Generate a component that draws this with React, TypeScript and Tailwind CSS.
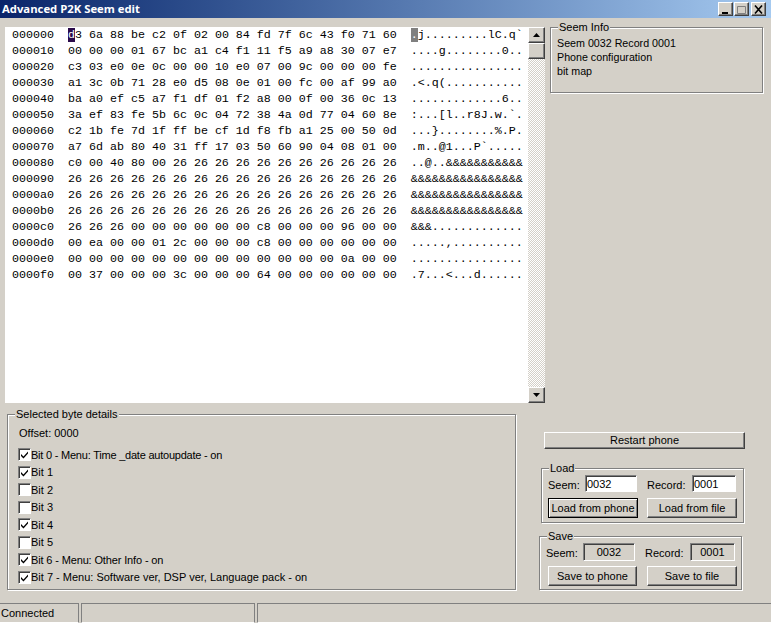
const rows = [
  'd3 6a 88 be c2 0f 02 00 84 fd 7f 6c 43 f0 71 60',
  '00 00 00 01 67 bc a1 c4 f1 11 f5 a9 a8 30 07 e7',
  'c3 03 e0 0e 0c 00 00 10 e0 07 00 9c 00 00 00 fe',
  'a1 3c 0b 71 28 e0 d5 08 0e 01 00 fc 00 af 99 a0',
  'ba a0 ef c5 a7 f1 df 01 f2 a8 00 0f 00 36 0c 13',
  '3a ef 83 fe 5b 6c 0c 04 72 38 4a 0d 77 04 60 8e',
  'c2 1b fe 7d 1f ff be cf 1d f8 fb a1 25 00 50 0d',
  'a7 6d ab 80 40 31 ff 17 03 50 60 90 04 08 01 00',
  'c0 00 40 80 00 26 26 26 26 26 26 26 26 26 26 26',
  '26 26 26 26 26 26 26 26 26 26 26 26 26 26 26 26',
  '26 26 26 26 26 26 26 26 26 26 26 26 26 26 26 26',
  '26 26 26 26 26 26 26 26 26 26 26 26 26 26 26 26',
  '26 26 26 00 00 00 00 00 00 c8 00 00 00 96 00 00',
  '00 ea 00 00 01 2c 00 00 00 c8 00 00 00 00 00 00',
  '00 00 00 00 00 00 00 00 00 00 00 00 00 0a 00 00',
  '00 37 00 00 00 3c 00 00 00 64 00 00 00 00 00 00',
];

const bits = [
  { label: 'Bit 0 - Menu: Time _date autoupdate - on', on: true, fit: 'tracking-[-0.22px]' },
  { label: 'Bit 1', on: true, fit: '' },
  { label: 'Bit 2', on: false, fit: '' },
  { label: 'Bit 3', on: false, fit: '' },
  { label: 'Bit 4', on: true, fit: '' },
  { label: 'Bit 5', on: false, fit: '' },
  { label: 'Bit 6 - Menu: Other Info - on', on: true, fit: 'tracking-[-0.14px]' },
  { label: 'Bit 7 - Menu: Software ver, DSP ver, Language pack - on', on: true, fit: '' },
];

const raised =
  'border border-t-white border-l-white border-r-[#404040] border-b-[#404040] shadow-[inset_-1px_-1px_0_#808080]';
const sunken =
  'border border-t-[#808080] border-l-[#808080] border-r-white border-b-white shadow-[inset_1px_1px_0_#404040]';
const etched =
  'border border-[#808080] shadow-[1px_1px_0_#fff,inset_1px_1px_0_#fff]';

// bytes to printable ascii, anything else shows as a dot
function toAscii(hex: string) {
  return hex
    .split(' ')
    .map((h) => {
      const c = parseInt(h, 16);
      return c >= 32 && c < 127 ? String.fromCharCode(c) : '.';
    })
    .join('');
}

function Group({ title, className, children }: { title: string; className: string; children: React.ReactNode }) {
  return (
    <fieldset className={`${etched} ${className}`}>
      <legend className="ml-[7px] bg-[#d4d0c8] px-[1px] leading-[14px]">{title}</legend>
      {children}
    </fieldset>
  );
}

function WinButton({ label, className, isDefault }: { label: string; className: string; isDefault?: boolean }) {
  return (
    <button
      className={`flex items-center justify-center bg-[#d4d0c8] ${
        isDefault ? 'border border-black shadow-[inset_1px_1px_0_#fff,inset_-1px_-1px_0_#808080]' : raised
      } ${className}`}
    >
      {label}
    </button>
  );
}

function CheckBox({ on }: { on: boolean }) {
  return (
    <span className={`flex h-[13px] w-[13px] shrink-0 items-center justify-center bg-white ${sunken}`}>
      {on && (
        <svg width="9" height="9" viewBox="0 0 9 9">
          <path d="M1 4 L3.5 6.5 L8 1.5 V3.5 L3.5 8.5 L1 6 Z" fill="#000" />
        </svg>
      )}
    </span>
  );
}

function ArrowButton({ up }: { up?: boolean }) {
  return (
    <div className={`flex h-[16px] w-[17px] items-center justify-center bg-[#d4d0c8] ${raised}`}>
      <svg width="7" height="4" viewBox="0 0 7 4">
        <path d={up ? 'M3.5 0 L7 4 H0 Z' : 'M0 0 H7 L3.5 4 Z'} fill="#000" />
      </svg>
    </div>
  );
}

function CaptionButton({ children }: { children: React.ReactNode }) {
  return (
    <div className={`flex h-[14px] w-[15px] items-center justify-center bg-[#d4d0c8] ${raised}`}>
      <svg width="10" height="9" viewBox="0 0 10 9">
        {children}
      </svg>
    </div>
  );
}

export default function App() {
  return (
    <div className="flex h-[623px] w-[771px] flex-col overflow-hidden bg-[#d4d0c8] font-['Liberation_Sans',Arial,sans-serif] text-[11px] text-black">
      {/* title bar */}
      <div className="flex h-[18px] items-center justify-between bg-gradient-to-r from-[#0a246a] to-[#a6caf0] pl-[2px] pr-[5px]">
        <span className="font-['Open_Sans',sans-serif] text-[11.3px] font-bold text-white">Advanced P2K Seem edit</span>
        <div className="flex gap-[1px]">
          <CaptionButton>
            <rect x="1" y="7" width="6" height="2" fill="#000" />
          </CaptionButton>
          <CaptionButton>
            <path d="M0.5 1.5 H8.5 V8.5 H0.5 Z" fill="none" stroke="#808080" />
          </CaptionButton>
          <div className="ml-[1px]">
            <CaptionButton>
              <path d="M1 0.5 L8 8.5 M8 0.5 L1 8.5" stroke="#000" strokeWidth="1.6" />
            </CaptionButton>
          </div>
        </div>
      </div>

      {/* hex view + seem info */}
      <div className="flex h-[385px]">
        <div className="ml-[5px] mt-[9px] flex h-[376px] w-[540px]">
          <div className="h-full w-[523px] overflow-hidden bg-white pl-[7px] font-['Liberation_Mono',monospace] text-[11.67px] leading-[16px] whitespace-pre">
            {rows.map((hex, i) => {
              const offset = (i * 16).toString(16).padStart(6, '0');
              const ascii = toAscii(hex);
              return (
                <div key={offset} className="h-[16px]">
                  {offset}
                  {'  '}
                  {i === 0 ? (
                    <>
                      <span className="bg-[#2a0a4a] text-white">{hex[0]}</span>
                      {hex.slice(1)}
                      {'  '}
                      <span className="bg-[#808080] text-white">{ascii[0]}</span>
                      {ascii.slice(1)}
                    </>
                  ) : (
                    <>
                      {hex}
                      {'  '}
                      {ascii}
                    </>
                  )}
                </div>
              );
            })}
          </div>
          <div className="flex h-full w-[17px] flex-col">
            <ArrowButton up />
            <div className={`h-[16px] w-[17px] bg-[#d4d0c8] ${raised}`} />
            <div className="flex-1 bg-[conic-gradient(#fff_25%,#d4d0c8_0_50%,#fff_0_75%,#d4d0c8_0)] bg-[length:2px_2px]" />
            <ArrowButton />
          </div>
        </div>
        <div className="ml-[5px] mt-[2px]">
          <Group title="Seem Info" className="h-[73px] w-[213px]">
            <div className="pl-[6px] pt-[2px] text-[10.7px] leading-[14px]">
              <div>Seem 0032 Record 0001</div>
              <div>Phone configuration</div>
              <div>bit map</div>
            </div>
          </Group>
        </div>
      </div>

      {/* bit details + load/save */}
      <div className="flex h-[200px]">
        <div className="w-[539px] pl-[7px] pt-[4px]">
          <Group title="Selected byte details" className="h-[183px] w-[509px]">
            <div className="pl-[11px] pt-[5px] leading-[14px]">Offset: 0000</div>
            <div className="mt-[6px] pl-[10px]">
              {bits.map((bit) => (
                <div key={bit.label} className="flex h-[17.5px] items-center">
                  <CheckBox on={bit.on} />
                  <span className={bit.fit}>{bit.label}</span>
                </div>
              ))}
            </div>
          </Group>
        </div>
        <div className="flex flex-col items-start pt-[29px]">
          <WinButton label="Restart phone" className="ml-[5px] h-[17px] w-[201px]" />
          <Group title="Load" className="ml-[2px] mt-[12px] h-[62px] w-[203px]">
            <div className="flex h-[17px] items-center pl-[6px]">
              <span className="w-[37px] pt-[3px]">Seem:</span>
              <span className={`h-[17px] w-[52px] bg-white pl-[1px] pt-[1px] leading-[15px] ${sunken}`}>0032</span>
              <span className="ml-[10px] w-[45px] pt-[3px]">Record:</span>
              <span className={`h-[17px] w-[44px] bg-white pl-[1px] pt-[1px] leading-[15px] ${sunken}`}>0001</span>
            </div>
            <div className="mt-[6px] flex pl-[6px]">
              <WinButton isDefault label="Load from phone" className="h-[20px] w-[90px]" />
              <WinButton label="Load from file" className="ml-[9px] h-[20px] w-[90px]" />
            </div>
          </Group>
          <Group title="Save" className="mt-[6px] h-[61px] w-[203px]">
            <div className="flex h-[18px] items-center pl-[6px]">
              <span className="w-[37px] pt-[3px]">Seem:</span>
              <span className={`h-[18px] w-[52px] pt-[1px] text-center leading-[15px] ${sunken}`}>0032</span>
              <span className="ml-[10px] w-[45px] pt-[3px]">Record:</span>
              <span className={`h-[18px] w-[45px] pt-[1px] text-center leading-[15px] ${sunken}`}>0001</span>
            </div>
            <div className="mt-[5px] flex pl-[8px]">
              <WinButton label="Save to phone" className="h-[20px] w-[89px]" />
              <WinButton label="Save to file" className="ml-[10px] h-[20px] w-[90px]" />
            </div>
          </Group>
        </div>
      </div>

      {/* status bar */}
      <div className="flex h-[20px] gap-[2px] pr-0">
        <div className="w-[79px] border-t border-r border-b border-t-[#808080] border-r-[#808080] border-b-white pl-[1px] leading-[18px]">Connected</div>
        <div className="w-[174px] border border-t-[#808080] border-l-[#808080] border-r-[#808080] border-b-white" />
        <div className="flex-1 border-t border-b border-l border-t-[#808080] border-l-[#808080] border-b-white" />
      </div>
    </div>
  );
}
